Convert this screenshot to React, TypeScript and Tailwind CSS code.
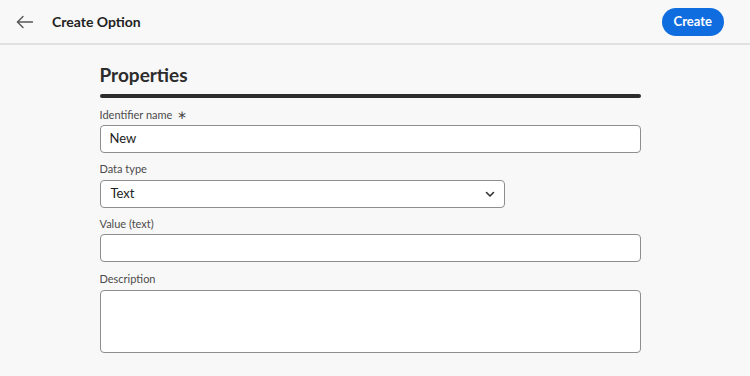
import React from "react";

export default function App() {
  return (
    <div className="w-[750px] h-[376px] overflow-hidden bg-[#f8f8f8] text-[#222]" style={{ fontFamily: 'Lato, "Open Sans", sans-serif' }}>
      <header className="h-[45px] flex items-center justify-between pl-[16px] pr-[26px] border-b-2 border-[#e1e1e1]">
        <div className="flex items-center">
          <svg width="18" height="14" viewBox="0 0 18 14" fill="none" stroke="#555" strokeWidth="1.4" strokeLinecap="round" strokeLinejoin="round">
            <path d="M16.5 7H1.5" />
            <path d="M7 1.5L1.5 7L7 12.5" />
          </svg>
          <h1 className="ml-[18px] text-[14px] font-bold text-[#222]">Create Option</h1>
        </div>
        <button className="h-[28px] px-[12px] rounded-full bg-[#0f6ddf] text-white text-[13px] font-bold">Create</button>
      </header>
      <main className="flex justify-center pt-[18px]">
        <div className="w-[541px] ml-[-10px]">
          <h2 className="text-[19px] font-bold text-[#2c2c2c] leading-[24px]">Properties</h2>
          <div className="h-[4px] bg-[#2c2c2c] rounded-sm mt-[7px]" />
          <div className="mt-[11px] text-[11px] text-[#4b4b4b] leading-[12px]">Identifier name <span className="ml-[2px] text-[12px]">∗</span></div>
          <div className="mt-[4px] h-[28px] rounded-[4px] border border-[#8e8e8e] bg-white flex items-center px-[9px] text-[13px] text-[#222]">New</div>
          <div className="mt-[10px] text-[11px] text-[#4b4b4b] leading-[12px]">Data type</div>
          <div className="mt-[5px] w-[405px] h-[28px] rounded-[4px] border border-[#8e8e8e] bg-white flex items-center justify-between pl-[10px] pr-[9px] text-[13px] text-[#222]">
            <span>Text</span>
            <svg width="10" height="7" viewBox="0 0 10 7" fill="none" stroke="#333" strokeWidth="1.6" strokeLinecap="round" strokeLinejoin="round">
              <path d="M1.5 1.5L5 5L8.5 1.5" />
            </svg>
          </div>
          <div className="mt-[10px] text-[11px] text-[#4b4b4b] leading-[12px]">Value (text)</div>
          <div className="mt-[4px] h-[28px] rounded-[4px] border border-[#8e8e8e] bg-white" />
          <div className="mt-[11px] text-[11px] text-[#4b4b4b] leading-[12px]">Description</div>
          <div className="mt-[5px] h-[63px] rounded-[4px] border border-[#8e8e8e] bg-white" />
        </div>
      </main>
    </div>
  );
}
